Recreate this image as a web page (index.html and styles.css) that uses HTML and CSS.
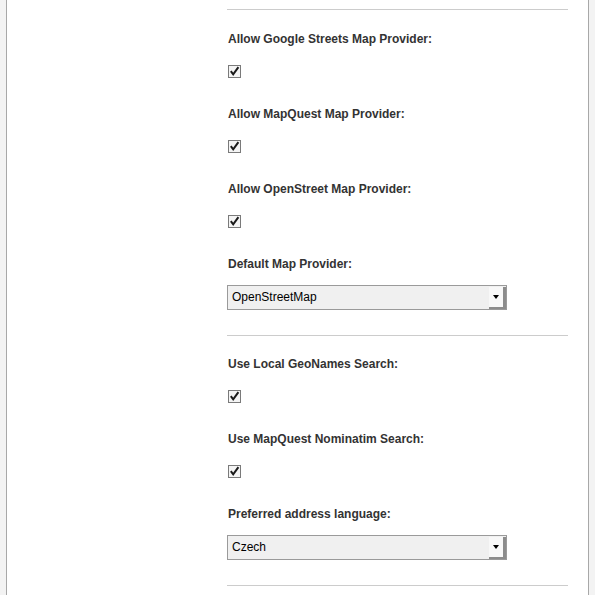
FILE: index.html
```html
<!DOCTYPE html>
<html lang="en">
<head>
    <meta charset="UTF-8">
    <title>Map settings</title>
    <link rel="stylesheet" href="styles.css">
</head>
<body>
    <div class="page">
        <div class="settings">
            <hr class="sep">

            <div class="section">
                <div class="field">
                    <label class="field-label">Allow Google Streets Map Provider:</label>
                    <span class="check"><svg viewBox="0 0 11 11" width="11" height="11"><path d="M1.8 5.2 L4.2 8.4 L9.4 1.2" fill="none" stroke="#1a1a1a" stroke-width="2"/></svg></span>
                </div>
                <div class="field">
                    <label class="field-label">Allow MapQuest Map Provider:</label>
                    <span class="check"><svg viewBox="0 0 11 11" width="11" height="11"><path d="M1.8 5.2 L4.2 8.4 L9.4 1.2" fill="none" stroke="#1a1a1a" stroke-width="2"/></svg></span>
                </div>
                <div class="field">
                    <label class="field-label">Allow OpenStreet Map Provider:</label>
                    <span class="check"><svg viewBox="0 0 11 11" width="11" height="11"><path d="M1.8 5.2 L4.2 8.4 L9.4 1.2" fill="none" stroke="#1a1a1a" stroke-width="2"/></svg></span>
                </div>
                <div class="field field-select">
                    <label class="field-label">Default Map Provider:</label>
                    <div class="select">
                        <span class="select-value">OpenStreetMap</span>
                        <span class="select-button"><span class="arrow"></span></span>
                    </div>
                </div>
            </div>

            <hr class="sep">

            <div class="section section-next">
                <div class="field">
                    <label class="field-label">Use Local GeoNames Search:</label>
                    <span class="check"><svg viewBox="0 0 11 11" width="11" height="11"><path d="M1.8 5.2 L4.2 8.4 L9.4 1.2" fill="none" stroke="#1a1a1a" stroke-width="2"/></svg></span>
                </div>
                <div class="field">
                    <label class="field-label">Use MapQuest Nominatim Search:</label>
                    <span class="check"><svg viewBox="0 0 11 11" width="11" height="11"><path d="M1.8 5.2 L4.2 8.4 L9.4 1.2" fill="none" stroke="#1a1a1a" stroke-width="2"/></svg></span>
                </div>
                <div class="field field-select">
                    <label class="field-label">Preferred address language:</label>
                    <div class="select">
                        <span class="select-value">Czech</span>
                        <span class="select-button"><span class="arrow"></span></span>
                    </div>
                </div>
            </div>

            <hr class="sep">
        </div>
    </div>
</body>
</html>
```

FILE: styles.css
```css
html, body {
    height: 100%;
}

body {
    margin: 0;
    background: #f3f3f3;
    font-family: "Liberation Sans", Arial, sans-serif;
    color: #333;
}

.page {
    margin: 0 6px;
    min-height: 100%;
    background: #fff;
    border-left: 1px solid #a8a8a8;
    border-right: 1px solid #a8a8a8;
}

.settings {
    padding: 9px 20px 0 220px;
}

.sep {
    margin: 0;
    border: 0;
    border-top: 1px solid #cccccc;
}

.section {
    padding: 21px 0 0 1px;
}

.section-next {
    padding-top: 20px;
}

.field {
    padding-bottom: 28px;
}

.field-label {
    display: block;
    font-size: 12px;
    font-weight: bold;
    line-height: 16px;
    margin-bottom: 18px;
}

.check {
    display: block;
    width: 11px;
    height: 11px;
    border: 1px solid #7a7a7a;
    background: #f4f4f4;
}

.check svg {
    display: block;
}

.field-select {
    padding-bottom: 25px;
}

.field-select .field-label {
    margin-bottom: 13px;
}

.select {
    display: flex;
    align-items: stretch;
    width: 278px;
    height: 23px;
    margin-left: -1px;
    border: 1px solid #9a9a9a;
    background: #f0f0f0;
    font-size: 12px;
    color: #000;
}

.select-value {
    flex: 1;
    padding-left: 4px;
    line-height: 23px;
}

.select-button {
    width: 14px;
    display: flex;
    align-items: center;
    justify-content: center;
    background: #f8f8f8;
    border-right: 3px solid #8c8c8c;
    border-bottom: 2px solid #8c8c8c;
    margin-top: 1px;
}

.arrow {
    width: 0;
    height: 0;
    border-left: 3px solid transparent;
    border-right: 3px solid transparent;
    border-top: 4px solid #000;
}
```
